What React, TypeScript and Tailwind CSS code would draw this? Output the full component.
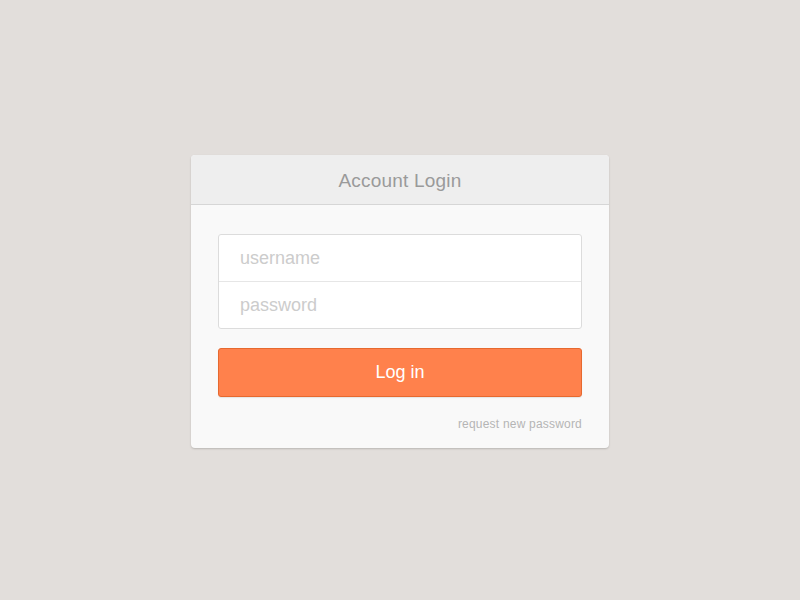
export default function App() {
  return (
    <div
      className="flex h-[600px] w-[800px] items-start justify-center bg-[#e2dedb] pt-[155px]"
      style={{ fontFamily: '"Liberation Sans", Arial, sans-serif' }}
    >
      <div className="w-[418px] overflow-hidden rounded-[4px] bg-[#f9f9f9] shadow-[0_1px_2px_rgba(0,0,0,0.18)]">
        <div className="flex h-[50px] items-center justify-center border-b border-[#d6d6d6] bg-[#eeeeee] pt-[3px]">
          <h1 className="text-[19px] tracking-[0.2px] text-[#9a9a9a]">Account Login</h1>
        </div>
        <div className="px-[27px] pt-[29px] pb-[16px]">
          <div className="rounded-[3px] border border-[#dcdcdc] bg-white">
            <input
              placeholder="username"
              className="block h-[47px] w-full border-b border-[#e6e6e6] bg-transparent px-[21px] text-[18px] text-[#555] outline-none placeholder:text-[#cccccc]"
            />
            <input
              type="password"
              placeholder="password"
              className="block h-[46px] w-full bg-transparent px-[21px] text-[18px] text-[#555] outline-none placeholder:text-[#cccccc]"
            />
          </div>
          <button className="mt-[19px] h-[49px] w-full rounded-[3px] border border-[#e6692f] bg-[#ff814c] text-[18px] text-white shadow-[0_1px_1px_rgba(0,0,0,0.08)]">
            Log in
          </button>
          <div className="mt-[20px] text-right text-[12px] leading-[15px] tracking-[0.2px] text-[#b5b5b5]">
            request new password
          </div>
        </div>
      </div>
    </div>
  );
}
